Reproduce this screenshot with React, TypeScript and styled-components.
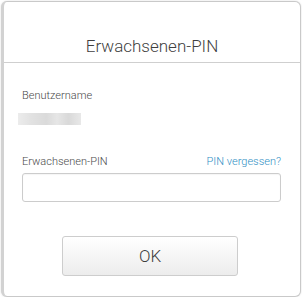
import styled, { createGlobalStyle } from "styled-components";

const GlobalStyle = createGlobalStyle`
  html, body {
    margin: 0;
    padding: 0;
    background: #ffffff;
    overflow: hidden;
  }
  body {
    font-family: Roboto, "Liberation Sans", sans-serif;
    color: #444444;
  }
`;

const Dialog = styled.div`
  margin: 1px 1px 0 1px;
  height: 296px;
  box-sizing: border-box;
  border: 1px solid #c9c9c9;
  border-left: 3px solid #d2d2d2;
  border-radius: 6px;
  background: #ffffff;
  box-shadow: 0 0 2px rgba(0, 0, 0, 0.15);
  display: flex;
  flex-direction: column;
`;

const Header = styled.div`
  height: 61px;
  box-sizing: border-box;
  padding-top: 33px;
  border-bottom: 1px solid #cfcfcf;
  text-align: center;
`;

const Title = styled.h1`
  margin: 0;
  font-size: 17px;
  line-height: 22px;
  font-weight: 300;
  color: #3f3f3f;
`;

const Body = styled.div`
  padding: 26px 19px 0 18px;
  display: flex;
  flex-direction: column;
`;

const Label = styled.span`
  font-size: 11px;
  line-height: 14px;
  font-weight: 300;
  color: #4a4a4a;
`;

const HiddenName = styled.div`
  margin-top: 10px;
  margin-left: -4px;
  width: 63px;
  height: 12px;
  background: linear-gradient(
    90deg,
    #ececec 0%,
    #e2e2e2 20%,
    #dadada 45%,
    #e6e6e6 62%,
    #d9d9d9 80%,
    #e8e8e8 100%
  );
  filter: blur(0.6px);
`;

const FieldHead = styled.div`
  margin-top: 30px;
  display: flex;
  justify-content: space-between;
  align-items: baseline;
`;

const ForgotLink = styled.a`
  font-size: 11px;
  line-height: 14px;
  font-weight: 300;
  color: #2f8fc4;
  text-decoration: none;
`;

const PinInput = styled.input`
  margin-top: 4px;
  height: 29px;
  box-sizing: border-box;
  border: 1px solid #cccccc;
  border-radius: 3px;
  box-shadow: inset 0 1px 1px rgba(0, 0, 0, 0.04);
  padding: 0 8px;
  font-size: 13px;
  outline: none;
`;

const Footer = styled.div`
  display: flex;
  justify-content: center;
  padding-top: 34px;
  padding-right: 4px;
`;

const OkButton = styled.button`
  width: 176px;
  height: 40px;
  border: 1px solid #cdcdcd;
  border-radius: 3px;
  background: linear-gradient(180deg, #ffffff 0%, #f6f6f6 50%, #ececec 100%);
  font-family: Roboto, "Liberation Sans", sans-serif;
  font-size: 17px;
  font-weight: 300;
  color: #3c3c3c;
  cursor: pointer;
`;

const App = () => {
  return (
    <>
      <GlobalStyle />
      <Dialog>
        <Header>
          <Title>Erwachsenen-PIN</Title>
        </Header>
        <Body>
          <Label>Benutzername</Label>
          <HiddenName />
          <FieldHead>
            <Label>Erwachsenen-PIN</Label>
            <ForgotLink href="#">PIN vergessen?</ForgotLink>
          </FieldHead>
          <PinInput type="password" />
        </Body>
        <Footer>
          <OkButton>OK</OkButton>
        </Footer>
      </Dialog>
    </>
  );
};

export default App;
